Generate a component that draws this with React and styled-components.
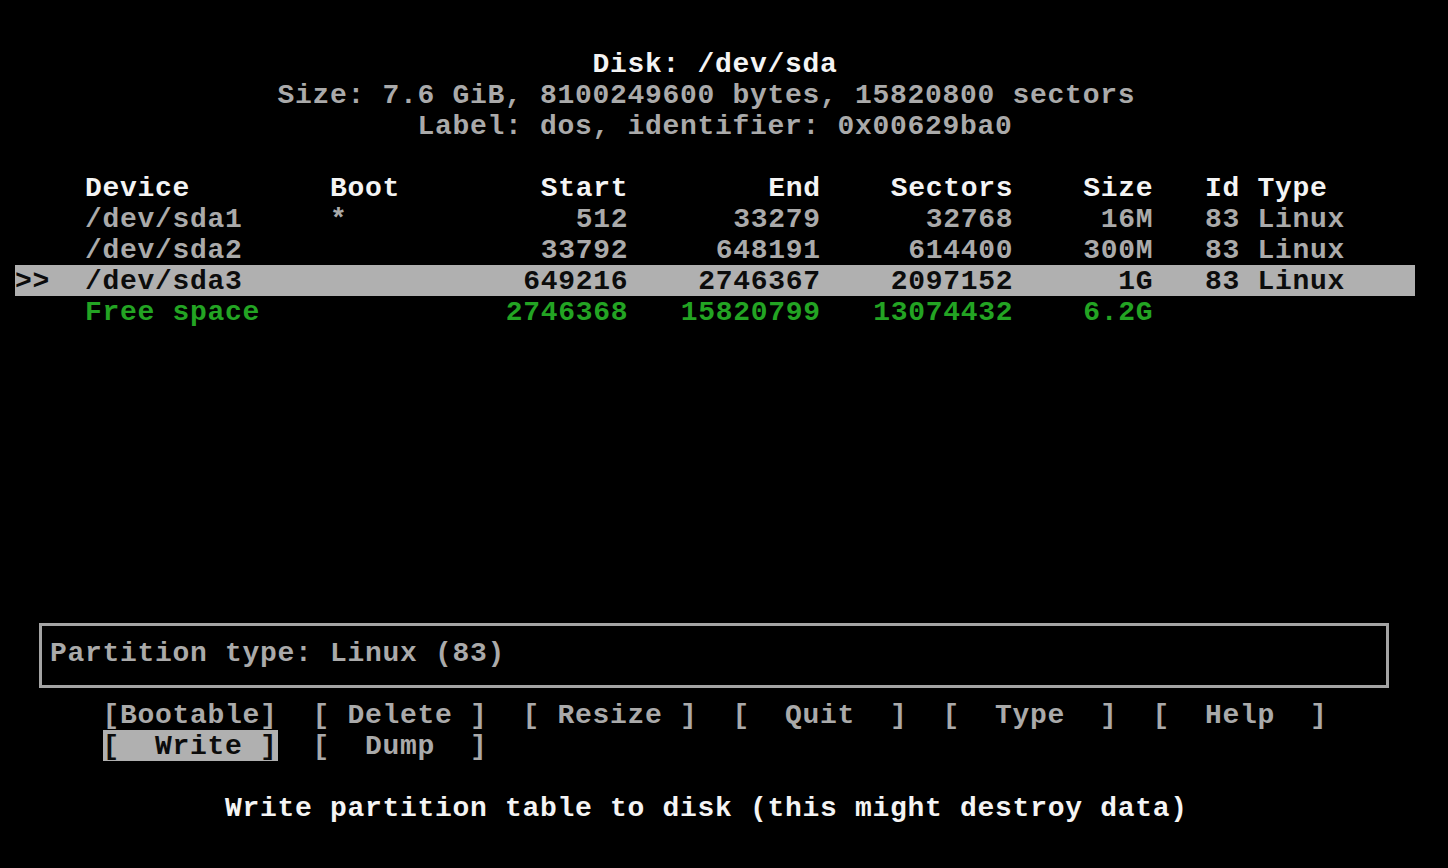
import React from "react";
import styled, { createGlobalStyle } from "styled-components";

// one terminal cell
const CW = 17.5;
const RH = 31;
const COLS = 80;
const cells = (n) => `${n * CW}px`;
// curses centres with integer division
const centreCol = (text) => Math.floor((COLS - text.length) / 2);

const GRAY = "#aaaaaa";
const WHITE = "#f4f4f4";
const GREEN = "#23a423";

const GlobalStyle = createGlobalStyle`
  html, body {
    margin: 0;
    background: #000;
    width: 1448px;
    height: 868px;
    overflow: hidden;
  }
`;

const Screen = styled.div`
  box-sizing: border-box;
  width: 1448px;
  height: 868px;
  padding: ${RH + 17}px 0 0 15px;
  background: #000;
  color: ${GRAY};
  font-family: "Liberation Mono", "DejaVu Sans Mono", monospace;
  font-weight: bold;
  font-size: 28px;
  letter-spacing: 0.7px;
  white-space: pre;
`;

const Line = styled.div`
  width: ${cells(COLS)};
  height: ${RH}px;
  line-height: 33px;
  padding-left: ${(p) => cells(p.$col || 0)};
  box-sizing: border-box;
  color: ${(p) => (p.$bright ? WHITE : GRAY)};
`;

const Table = styled.div`
  margin-top: ${RH}px;
  width: ${cells(COLS)};
`;

const Row = styled.div`
  display: grid;
  grid-template-columns: ${[4, 14, 7, 10, 11, 11, 8, 3, 3, 9].map(cells).join(" ")};
  width: ${cells(COLS)};
  height: ${RH}px;
  line-height: 33px;
  color: ${(p) => (p.$selected ? "#0c0c0c" : p.$tone === "head" ? WHITE : p.$tone === "free" ? GREEN : GRAY)};
  background: ${(p) => (p.$selected ? "#b0b0b0" : "transparent")};
`;

const Cell = styled.span`
  text-align: ${(p) => (p.$right ? "right" : "left")};
  margin-right: ${(p) => (p.$right ? "-0.7px" : "0")};
`;

const InfoBox = styled.div`
  box-sizing: border-box;
  margin: 296px 0 0 24px;
  width: 1350px;
  height: 65px;
  border: 3px solid #a4a4a4;
  padding: 11px 0 0 8px;
  line-height: 33px;
  color: ${GRAY};
`;

const Buttons = styled.div`
  display: grid;
  grid-template-columns: repeat(6, ${cells(10)});
  column-gap: ${cells(2)};
  margin: 11px 0 0 ${cells(5)};
`;

const Button = styled.span`
  height: ${RH}px;
  line-height: 33px;
  color: ${(p) => (p.$active ? "#0c0c0c" : GRAY)};
  background: ${(p) => (p.$active ? "#b0b0b0" : "transparent")};
`;

const Hint = styled(Line)`
  margin-top: ${RH}px;
`;

const partitions = [
  { dev: "/dev/sda1", boot: "*", start: "512", end: "33279", sectors: "32768", size: "16M", id: "83", type: "Linux" },
  { dev: "/dev/sda2", boot: "", start: "33792", end: "648191", sectors: "614400", size: "300M", id: "83", type: "Linux" },
  { dev: "/dev/sda3", boot: "", start: "649216", end: "2746367", sectors: "2097152", size: "1G", id: "83", type: "Linux", selected: true },
  { dev: "Free space", boot: "", start: "2746368", end: "15820799", sectors: "13074432", size: "6.2G", id: "", type: "", free: true },
];

const buttons = ["[Bootable]", "[ Delete ]", "[ Resize ]", "[  Quit  ]", "[  Type  ]", "[  Help  ]", "[  Write ]", "[  Dump  ]"];

const header = [
  "Disk: /dev/sda",
  "Size: 7.6 GiB, 8100249600 bytes, 15820800 sectors",
  "Label: dos, identifier: 0x00629ba0",
];

const hint = "Write partition table to disk (this might destroy data)";

function PartRow({ p, tone, cursor }) {
  return (
    <Row $tone={tone} $selected={p.selected}>
      <Cell>{cursor}</Cell>
      <Cell>{p.dev}</Cell>
      <Cell>{p.boot}</Cell>
      <Cell $right>{p.start}</Cell>
      <Cell $right>{p.end}</Cell>
      <Cell $right>{p.sectors}</Cell>
      <Cell $right>{p.size}</Cell>
      <Cell />
      <Cell>{p.id}</Cell>
      <Cell>{p.type}</Cell>
    </Row>
  );
}

export default function App() {
  return (
    <>
      <GlobalStyle />
      <Screen>
        {header.map((t, i) => (
          <Line key={t} $col={centreCol(t)} $bright={i === 0}>{t}</Line>
        ))}

        <Table>
          <PartRow
            tone="head"
            p={{ dev: "Device", boot: "Boot", start: "Start", end: "End", sectors: "Sectors", size: "Size", id: "Id", type: "Type" }}
          />
          {partitions.map((p) => (
            <PartRow key={p.dev} p={p} tone={p.free ? "free" : "data"} cursor={p.selected ? ">>" : ""} />
          ))}
        </Table>

        <InfoBox>Partition type: Linux (83)</InfoBox>

        <Buttons>
          {buttons.map((b) => (
            <Button key={b} $active={b.includes("Write")}>{b}</Button>
          ))}
        </Buttons>

        <Hint $col={centreCol(hint)} $bright>{hint}</Hint>
      </Screen>
    </>
  );
}
